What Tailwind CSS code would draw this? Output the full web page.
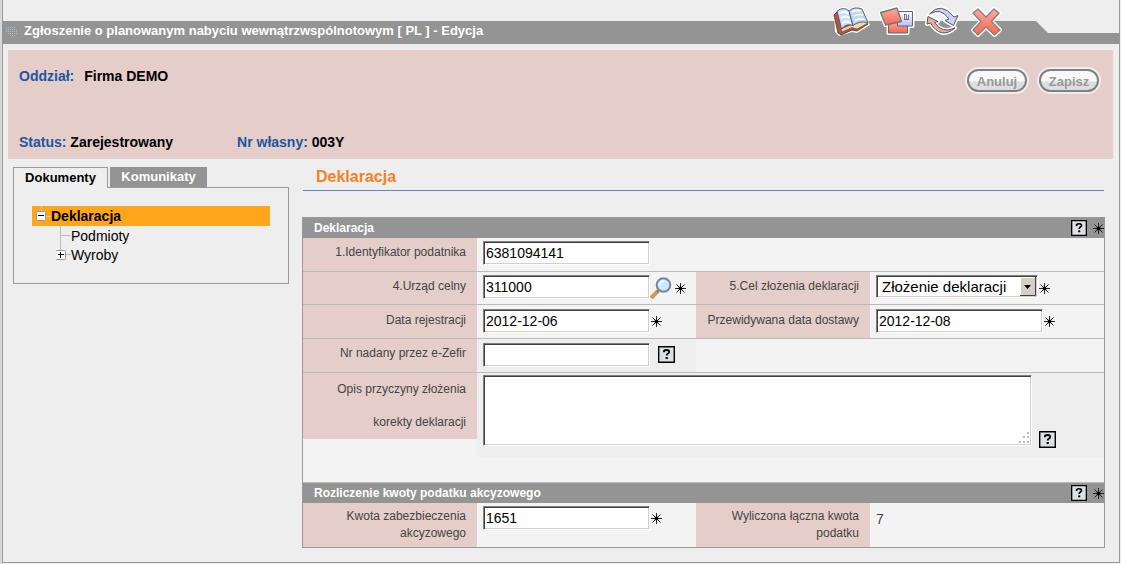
<!DOCTYPE html>
<html lang="pl">
<head>
<meta charset="utf-8">
<title>Zgłoszenie o planowanym nabyciu</title>
<script src="https://cdn.jsdelivr.net/npm/@tailwindcss/browser@4"></script>
</head>
<body class="min-h-screen bg-[#eeeeee] font-['Liberation_Sans',Arial,sans-serif] text-black">
<svg class="hidden" aria-hidden="true">
  <symbol id="star" viewBox="0 0 11 11"><path d="M5.500 0v11M0 5.500h11M1.500 1.500l8 8M9.500 1.500l-8 8" stroke="#222" stroke-width="1" fill="none"/><circle cx="5.500" cy="5.500" r="2" fill="#000"/></symbol>
  <symbol id="help" viewBox="0 0 17 17"><path d="M.7 .7h15.600v15.600H.7z" fill="#dce1e3" stroke="#000" stroke-width="1.400"/><path d="M5.900 6.300V5.500Q6 4 8.500 4t2.700 1.700q0 1.400-1.500 2.100-1 .5-1 1.700" stroke="#000" stroke-width="1.800" fill="none"/><path d="M7.600 11h2.200v2H7.600z"/></symbol>
</svg>
<div class="flex min-h-screen flex-col border-l-2 border-[#d8d8d8]">
<div class="mr-px mb-px flex grow flex-col border-r border-b border-l border-[#999999]">
  <header class="relative -ml-px flex h-11 items-end">
    <div class="absolute inset-x-0 bottom-0 flex h-[23px] items-end">
      <div class="h-full grow bg-[#949494]"></div>
      <svg class="h-[23px] w-3" viewBox="0 0 12 23"><path d="M0 0L12 12V23H0z" fill="#949494"/></svg>
      <div class="h-[11px] w-[71px] bg-[#949494]"></div>
    </div>
    <div class="relative flex h-[23px] grow items-center gap-[7px] pb-1 pl-1">
      <svg class="h-2.5 w-[11px]" viewBox="0 0 11 10" fill="none" stroke="#a9bccb" stroke-dasharray="1 1"><path d="M0 1.500h9M0 3.500h11M0 5.500h11M2 7.500h9M4 9.500h6"/></svg>
      <h1 class="text-[13px] font-bold leading-4 text-white">Zgłoszenie o planowanym nabyciu wewnątrzwspólnotowym [ PL ] - Edycja</h1>
    </div>
    <nav class="relative mr-[115px] flex h-11 items-start gap-2 pt-1">
      <a href="#" aria-label="Książka"><svg class="h-[34px] w-[38px]" viewBox="0 0 38 34">
        <path d="M2 9L6 4L13 3L18 5L22 3L31 3L38 21L25 29L20 28L7 32L3 28z" fill="#fff"/>
        <path d="M5 8L2 11L6 29L9 31L20 26L25 27L36 20L30 9z" fill="#b55340" stroke="#5b4036" stroke-width=".9" stroke-linejoin="round"/>
        <path d="M9 25L10 28L20 23.500L25 25L36 19L34 16L21 20z" fill="#f1d8b4" stroke="#7a5238" stroke-width=".7"/>
        <path d="M5 7Q12 2 17 7L21 21.500Q14 19 9.500 25z" fill="#c9e0fa" stroke="#4a5666" stroke-width=".9"/>
        <path d="M17 7Q22 2 30 5L36 18.500Q27 16.500 21 21.500z" fill="#bcd7f7" stroke="#4a5666" stroke-width=".9"/>
        <path d="M7.500 9.500q5-3 9 0M9 14q5-3 8.500 0M10.500 19q4-3 8 0" stroke="#fff" stroke-width="2" fill="none"/>
        <path d="M20 8q4-2.500 9-1M22 12q4-2.500 9-1M23 16.500q4-2.500 9.500-1" stroke="#fff" stroke-width="1.800" fill="none"/>
      </svg></a>
      <a href="#" aria-label="Koperty"><svg class="h-[34px] w-[38px]" viewBox="0 0 38 34">
        <defs><linearGradient id="red" x1="0" y1="0" x2="0" y2="1"><stop stop-color="#f6aca2"/><stop offset="1" stop-color="#fa6450"/></linearGradient><linearGradient id="blue" x1="0" y1="0" x2="0" y2="1"><stop stop-color="#fff"/><stop offset="1" stop-color="#b6bfff"/></linearGradient></defs>
        <g stroke="#fff" stroke-width="4" stroke-linejoin="round" fill="#fff"><path d="M10.500 17H29.500V29H10.500zM19.500 7.500H34.500V22H19.500zM2.500 8.500L19 4L23.500 17.500L7.500 21z"/></g>
        <path d="M10.500 17H29.500V29H10.500z" fill="url(#red)" stroke="#666"/>
        <path d="M19.500 7.500H34.500V22H19.500z" fill="url(#blue)" stroke="#666"/><path d="M26.500 10.500v5M28.500 10.500v5M30.500 10.500v5M26 10.500h2M26 15.500h5" stroke="#555" stroke-width=".8"/>
        <path d="M2.500 8.500L19 4L23.500 17.500L7.500 21z" fill="url(#red)" stroke="#777" stroke-width="1.300" stroke-linejoin="round"/>
      </svg></a>
      <a href="#" aria-label="Odśwież"><svg class="h-[34px] w-[38px]" viewBox="0 0 38 34">
        <g stroke="#fff" stroke-width="4" stroke-linejoin="round" fill="#fff"><path d="M5.500 10Q17-3 30 13L34 11.500L29.500 21.500L21 16.500L25 15Q17 3 5.500 10z"/><path d="M31 24Q17 36 6.500 19L3 20L4 12.500L14 17.500L10.500 18.500Q18 30 31 24z"/></g>
        <path d="M5.500 10Q17-3 30 13L34 11.500L29.500 21.500L21 16.500L25 15Q17 3 5.500 10z" fill="#cdd2fb" stroke="#555" stroke-linejoin="round"/>
        <path d="M31 24Q17 36 6.500 19L3 20L4 12.500L14 17.500L10.500 18.500Q18 30 31 24z" fill="#efaaa4" stroke="#555" stroke-linejoin="round"/>
      </svg></a>
      <a href="#" aria-label="Usuń"><svg class="h-[34px] w-[34px]" viewBox="0 0 34 34">
        <path d="M8 5L16 13L24 5L29 9L21.500 17.500L30 26L24.500 31L16 23L8 31L3 26L11 17.500L3 9z" fill="#fff" stroke="#fff" stroke-width="4" stroke-linejoin="round"/>
        <path d="M8 5L16 13L24 5L29 9L21.500 17.500L30 26L24.500 31L16 23L8 31L3 26L11 17.500L3 9z" fill="url(#red)" stroke="#8a7f7c" stroke-width="1.400" stroke-linejoin="round"/>
      </svg></a>
    </nav>
  </header>

  <section class="mt-1.5 mr-1.5 ml-[5px] flex h-[109px] justify-between bg-[#e5cdc9] pt-[17px] pr-3 pb-2 pl-[11px] text-sm leading-[18px] font-bold">
    <div class="flex flex-col justify-between">
      <p><span class="mr-2.5 text-[#1c57a0]">Oddział:</span>Firma DEMO</p>
      <div class="flex gap-16">
        <p><span class="text-[#1c57a0]">Status:</span> Zarejestrowany</p>
        <p><span class="text-[#1c57a0]">Nr własny:</span> 003Y</p>
      </div>
    </div>
    <div class="flex items-start gap-2">
      <button class="h-[27px] w-16 rounded-full border-2 border-[#eeeeee] bg-[#eeeeee]"><span class="flex h-[23px] items-center justify-center rounded-full border-2 border-[#808080] bg-linear-to-b from-[#f8f8f8] from-50% to-[#dedede] to-60% pt-0.5 text-[13px] text-[#999999]">Anuluj</span></button>
      <button class="h-[27px] w-16 rounded-full border-2 border-[#eeeeee] bg-[#eeeeee]"><span class="flex h-[23px] items-center justify-center rounded-full border-2 border-[#808080] bg-linear-to-b from-[#f8f8f8] from-50% to-[#dedede] to-60% pt-0.5 text-[13px] text-[#999999]">Zapisz</span></button>
    </div>
  </section>

  <div class="flex items-start gap-[13px] pt-2 pr-3.5 pl-2.5">
    <aside class="w-[276px] shrink-0">
      <div class="flex gap-0.5 text-[13px] font-bold">
        <button class="relative z-10 -mb-px h-[21px] w-[95px] border border-b-0 border-[#999999] bg-[#eeeeee]">Dokumenty</button>
        <button class="h-5 w-[97px] bg-[#949494] text-white">Komunikaty</button>
      </div>
      <div class="h-[97px] border border-[#999999] px-[18px] pt-[18px] text-sm">
        <a href="#" class="flex h-5 items-center bg-[#ffa519] pl-1 font-bold"><svg class="h-5 w-[15px]" viewBox="0 0 15 20"><path d="M5.500 0v5M10 10.500h5" stroke="#ccc"/><rect x=".5" y="5.500" width="9" height="9" rx="1" fill="#fff" stroke="#999"/><path d="M2 9.500h6" stroke="#000"/></svg>Deklaracja</a>
        <a href="#" class="flex h-5 items-center pl-6"><svg class="h-5 w-[15px]" viewBox="0 0 15 20"><path d="M4.500 0v20M4.500 9.500h10" stroke="#bbb" fill="none"/></svg>Podmioty</a>
        <a href="#" class="flex h-[18px] items-center pl-6"><svg class="h-[18px] w-[15px]" viewBox="0 0 15 18"><path d="M4.500 0v5M10 8.500h5" stroke="#bbb"/><rect x="-.5" y="4.500" width="10" height="9" rx="1" fill="#fff" stroke="#999"/><path d="M2 8.500h6M4.500 6v6" stroke="#000"/></svg>Wyroby</a>
      </div>
    </aside>

    <main class="min-w-0 grow">
      <h2 class="mr-px ml-px h-6 border-b border-[#6384bd] pl-[13px] text-base leading-5 font-bold text-[#f58220]">Deklaracja</h2>
      <form class="mt-[26px] border border-[#999999] bg-[#f3f3f3] text-xs text-[#444444]">
        <div class="flex h-5 items-center bg-[#949494] pl-[11px] text-white">
          <h3 class="grow font-bold">Deklaracja</h3>
          <button type="button" aria-label="Pomoc" class="mr-1.5"><svg class="size-4"><use href="#help"/></svg></button>
          <svg class="size-[11px]"><use href="#star"/></svg>
        </div>
        <div class="grid grid-cols-[174px_219px_174px_1fr]">
          <label for="idp" class="h-[34px] border-b border-[#bbbbbb] bg-[#e5cdc9] pt-1.5 pr-[11px] text-right">1.Identyfikator podatnika</label>
          <div class="col-span-3 flex items-start border-b border-[#bbbbbb] pt-[3px] pl-1.5"><input id="idp" value="6381094141" class="h-6 w-[167px] border border-t-[#808080] border-r-white border-b-white border-l-[#808080] bg-white px-0.5 text-sm text-black shadow-[inset_1px_1px_0_#404040,inset_-1px_-1px_0_#d4d0c8]"></div>

          <label for="uc" class="h-[33px] border-b border-[#bbbbbb] bg-[#e5cdc9] pt-1.5 pr-[11px] text-right">4.Urząd celny</label>
          <div class="flex items-start border-b border-[#bbbbbb] pt-[3px] pl-1.5"><input id="uc" value="311000" class="h-6 w-[167px] border border-t-[#808080] border-r-white border-b-white border-l-[#808080] bg-white px-0.5 text-sm text-black shadow-[inset_1px_1px_0_#404040,inset_-1px_-1px_0_#d4d0c8]">
            <button type="button" aria-label="Szukaj" class="mt-0.5"><svg class="h-[22px] w-[22px]" viewBox="0 0 22 22"><path d="M1 21L8 14" stroke="#df9449" stroke-width="4"/><path d="M7 15l3-3" stroke="#777" stroke-width="2"/><circle cx="13.500" cy="8" r="6.800" fill="#c7e9fc" stroke="#7088a4" stroke-width="2"/><path d="M9.500 8q1-4 5-4" stroke="#fff" stroke-width="2" fill="none"/></svg></button>
            <svg class="mt-2 ml-[3px] size-[11px]"><use href="#star"/></svg></div>
          <label for="cel" class="border-b border-[#bbbbbb] bg-[#e5cdc9] pt-1.5 pr-[11px] text-right">5.Cel złożenia deklaracji</label>
          <div class="flex items-start border-b border-[#bbbbbb] pt-[3px] pl-1.5">
            <div class="relative"><select id="cel" class="h-[23px] w-[162px] appearance-none border border-t-[#808080] border-r-white border-b-white border-l-[#808080] bg-white pl-[5px] text-[15px] text-black shadow-[inset_1px_1px_0_#404040,inset_-1px_-1px_0_#d4d0c8]"><option>Złożenie deklaracji</option></select>
            <svg class="pointer-events-none absolute top-0.5 right-0.5 h-[19px] w-4" viewBox="0 0 16 19"><path d="M0 0h16v19H0z" fill="#d4d0c8"/><path d="M.5 19V.5H16" stroke="#fff" fill="none"/><path d="M0 18.500h15.500V0" stroke="#404040" fill="none"/><path d="M4 8h7l-3.500 4z"/></svg></div>
            <svg class="mt-2 ml-px size-[11px]"><use href="#star"/></svg></div>

          <label for="dr" class="h-[34px] border-b border-[#bbbbbb] bg-[#e5cdc9] pt-[7px] pr-[11px] text-right">Data rejestracji</label>
          <div class="flex items-start border-b border-[#bbbbbb] pt-1 pl-1.5"><input id="dr" value="2012-12-06" class="h-6 w-[167px] border border-t-[#808080] border-r-white border-b-white border-l-[#808080] bg-white px-0.5 text-sm text-black shadow-[inset_1px_1px_0_#404040,inset_-1px_-1px_0_#d4d0c8]"><svg class="mt-[7px] ml-px size-[11px]"><use href="#star"/></svg></div>
          <label for="dd" class="border-b border-[#bbbbbb] bg-[#e5cdc9] pt-[7px] pr-[11px] text-right">Przewidywana data dostawy</label>
          <div class="flex items-start border-b border-[#bbbbbb] pt-1 pl-1.5"><input id="dd" value="2012-12-08" class="h-6 w-[167px] border border-t-[#808080] border-r-white border-b-white border-l-[#808080] bg-white px-0.5 text-sm text-black shadow-[inset_1px_1px_0_#404040,inset_-1px_-1px_0_#d4d0c8]"><svg class="mt-[7px] ml-px size-[11px]"><use href="#star"/></svg></div>

          <label for="nr" class="h-[34px] border-b border-[#bbbbbb] bg-[#e5cdc9] pt-1.5 pr-[11px] text-right">Nr nadany przez e-Zefir</label>
          <div class="flex items-start border-b border-[#bbbbbb] bg-[#eeeeee] pt-1 pl-1.5"><input id="nr" class="h-6 w-[167px] border border-t-[#808080] border-r-white border-b-white border-l-[#808080] bg-white px-0.5 text-sm text-black shadow-[inset_1px_1px_0_#404040,inset_-1px_-1px_0_#d4d0c8]"><button type="button" aria-label="Pomoc" class="mt-[3px] ml-2"><svg class="size-[17px]"><use href="#help"/></svg></button></div>
          <div class="col-span-2 border-b border-[#bbbbbb]"></div>

          <label for="op" class="h-[66px] bg-[#e5cdc9] pr-[11px] text-right leading-[33px]">Opis przyczyny złożenia<br>korekty deklaracji</label>
          <div class="col-span-3 mb-[25px] flex h-[84px] items-start bg-[#eeeeee] pt-0.5 pl-1.5"><div class="relative"><textarea id="op" class="block h-[71px] w-[549px] resize-none border border-t-[#808080] border-r-white border-b-white border-l-[#808080] bg-white p-0.5 text-sm text-black shadow-[inset_1px_1px_0_#404040,inset_-1px_-1px_0_#d4d0c8]"></textarea>
            <svg class="pointer-events-none absolute right-[3px] bottom-[3px] size-[11px]" viewBox="0 0 11 11" fill="#bbb"><path d="M9 0h2v2H9zM5 4h2v2H5zM9 4h2v2H9zM1 9h2v2H1zM5 9h2v2H5zM9 9h2v2H9z"/></svg></div>
            <button type="button" aria-label="Pomoc" class="mt-14 ml-[7px]"><svg class="size-[17px]"><use href="#help"/></svg></button></div>
        </div>
        <div class="flex h-[21px] items-center border-t border-[#bbbbbb] bg-[#949494] pl-[11px] text-white">
          <h3 class="grow font-bold">Rozliczenie kwoty podatku akcyzowego</h3>
          <button type="button" aria-label="Pomoc" class="mr-1.5"><svg class="size-4"><use href="#help"/></svg></button>
          <svg class="size-[11px]"><use href="#star"/></svg>
        </div>
        <div class="grid h-11 grid-cols-[174px_219px_174px_1fr]">
          <label for="kz" class="bg-[#e5cdc9] pt-[5px] pr-[11px] pl-8 text-right leading-[17px]">Kwota zabezbieczenia akcyzowego</label>
          <div class="flex items-start pt-[3px] pl-1.5"><input id="kz" value="1651" class="h-6 w-[167px] border border-t-[#808080] border-r-white border-b-white border-l-[#808080] bg-white px-0.5 text-sm text-black shadow-[inset_1px_1px_0_#404040,inset_-1px_-1px_0_#d4d0c8]"><svg class="mt-[7px] ml-px size-[11px]"><use href="#star"/></svg></div>
          <span class="bg-[#e5cdc9] pt-[5px] pr-[11px] text-right leading-[17px]">Wyliczona łączna kwota<br>podatku</span>
          <output class="pt-[7px] pl-1.5 text-sm leading-[18px]">7</output>
        </div>
      </form>
    </main>
  </div>
</div>
</div>
</body>
</html>
